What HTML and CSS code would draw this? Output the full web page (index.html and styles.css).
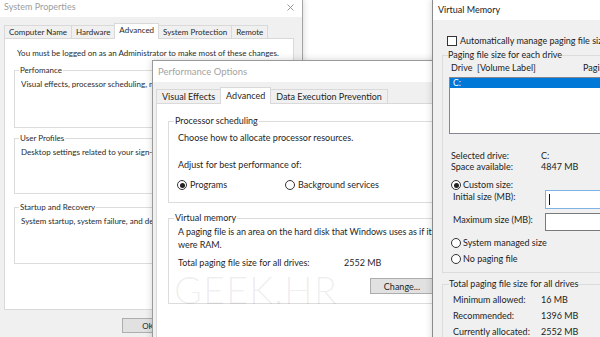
FILE: index.html
```html
<!DOCTYPE html>
<html lang="en">
<head>
<meta charset="utf-8">
<title>Virtual Memory</title>
<link rel="stylesheet" href="styles.css">
</head>
<body>
<div class="win sys">
  <div class="titlebar">
    <span class="title">System Properties</span>
    <svg class="close" width="7" height="7" viewBox="0 0 7 7"><path d="M0.5 0.5L6.5 6.5M6.5 0.5L0.5 6.5" stroke="#8c8c8c" stroke-width="0.9" fill="none"/></svg>
  </div>
  <div class="body">
    <div class="tabs">
      <div class="tab">Computer Name</div>
      <div class="tab">Hardware</div>
      <div class="tab sel">Advanced</div>
      <div class="tab">System Protection</div>
      <div class="tab">Remote</div>
    </div>
    <div class="panel">
      <p class="note">You must be logged on as an Administrator to make most of these changes.</p>
      <div class="group g1"><span class="legend">Perfomance</span><p class="txt">Visual effects, processor scheduling, memory usage, and virtual memory</p></div>
      <div class="group g2"><span class="legend">User Profiles</span><p class="txt">Desktop settings related to your sign-in</p></div>
      <div class="group g3"><span class="legend">Startup and Recovery</span><p class="txt">System startup, system failure, and debugging information</p></div>
    </div>
    <div class="btns"><button class="btn">OK</button><button class="btn">Cancel</button></div>
  </div>
</div>

<div class="win perf">
  <div class="titlebar"><span class="title">Performance Options</span></div>
  <div class="body">
    <div class="tabs">
      <div class="tab">Visual Effects</div>
      <div class="tab sel">Advanced</div>
      <div class="tab">Data Execution Prevention</div>
    </div>
    <div class="panel">
      <div class="group pg1">
        <span class="legend">Processor scheduling</span>
        <p class="line l1">Choose how to allocate processor resources.</p>
        <p class="line l2">Adjust for best performance of:</p>
        <div class="radios">
          <div class="ritem first"><span class="radio on"></span><span class="rlabel">Programs</span></div>
          <div class="ritem"><span class="radio"></span><span class="rlabel">Background services</span></div>
        </div>
      </div>
      <div class="group pg2">
        <span class="legend">Virtual memory</span>
        <p class="para">A paging file is an area on the hard disk that Windows uses as if it<br>were RAM.</p>
        <div class="total"><span class="tlabel">Total paging file size for all drives:</span><span>2552 MB</span></div>
        <button class="btn change">Change...</button>
      </div>
    </div>
  </div>
  <div class="watermark">GEEK.HR</div>
</div>

<div class="win vm">
  <div class="titlebar"><span class="title">Virtual Memory</span></div>
  <div class="body">
    <div class="check-row"><span class="checkbox"></span><span class="clabel">Automatically manage paging file size for all drives</span></div>
    <div class="group vg1">
      <span class="legend">Paging file size for each drive</span>
      <div class="hdr"><span class="hcol">Drive&nbsp; [Volume Label]</span><span>Paging File Size (MB)</span></div>
      <div class="listbox"><div class="item sel">C:</div></div>
      <div class="info first"><span class="ilabel">Selected drive:</span><span>C:</span></div>
      <div class="info"><span class="ilabel">Space available:</span><span>4847 MB</span></div>
      <div class="vradio custom"><span class="radio on"></span><span class="rlabel">Custom size:</span></div>
      <div class="field initial"><span class="flabel">Initial size (MB):</span><span class="input focus"><span class="caret"></span></span></div>
      <div class="field maximum"><span class="flabel">Maximum size (MB):</span><span class="input"></span></div>
      <div class="vradio sysm"><span class="radio"></span><span class="rlabel">System managed size</span></div>
      <div class="vradio nopf"><span class="radio"></span><span class="rlabel">No paging file</span></div>
    </div>
    <div class="group vg2">
      <span class="legend">Total paging file size for all drives</span>
      <div class="trow first"><span class="tl">Minimum allowed:</span><span>16 MB</span></div>
      <div class="trow"><span class="tl">Recommended:</span><span>1396 MB</span></div>
      <div class="trow"><span class="tl">Currently allocated:</span><span>2552 MB</span></div>
    </div>
  </div>
</div>
</body>
</html>
```
FILE: styles.css
```css
* { box-sizing: border-box; margin: 0; padding: 0; }
html, body { width: 600px; height: 337px; overflow: hidden; background: #fff; }
body { position: relative; font-family: Lato, "Liberation Sans", sans-serif; color: #1f1f1f; }

.win {
  position: absolute;
  display: flex;
  flex-direction: column;
  background: #f0f0f0;
  border: 1px solid #a3a3a3;
  box-shadow: 0 0 7px rgba(0, 0, 0, 0.18);
}
.titlebar {
  flex: none;
  display: flex;
  align-items: center;
  justify-content: space-between;
  background: #fff;
}
.title { white-space: nowrap; }
.body { flex: 1; display: flex; flex-direction: column; }
.tabs { display: flex; align-items: flex-end; flex: none; }
.tab {
  border: 1px solid #d9d9d9;
  border-bottom: none;
  background: #f0f0f0;
  margin-right: -1px;
  white-space: nowrap;
}
.tab.sel { background: #fff; position: relative; z-index: 1; margin-bottom: -1px; }
.panel { background: #fff; border: 1px solid #d9d9d9; flex: none; }
.group { border: 1px solid #dcdcdc; flex: none; }
.legend { display: block; width: fit-content; background: inherit; white-space: nowrap; }
.btn {
  display: block;
  font-family: inherit;
  color: #1f1f1f;
  background: #e1e1e1;
  border: 1px solid #adadad;
}
.radio {
  flex: none;
  width: 10px;
  height: 10px;
  border: 1px solid #333;
  border-radius: 50%;
  background: #fff;
  display: flex;
  align-items: center;
  justify-content: center;
}
.radio.on::after { content: ""; width: 5px; height: 5px; border-radius: 50%; background: #222; }

/* ---------- System Properties ---------- */
.sys { left: -1px; top: -1px; width: 304px; height: 350px; font-size: 8px; color: #2a2a2a; }
.sys .titlebar { height: 17px; padding: 0 8px 3px 4px; }
.sys .title { font-size: 9px; color: #9d9d9d; line-height: 12px; }
.sys .body { padding-left: 4px; }
.sys .tabs { margin-top: 6px; height: 15px; }
.sys .tab { height: 13px; line-height: 12px; padding: 0 4px; }
.sys .tab.sel { height: 16px; line-height: 13px; }
.sys .panel { width: 290px; height: 272px; }
.sys .note { margin: 9px 0 0 12px; line-height: 10px; white-space: nowrap; }
.sys .group { margin-left: 9px; width: 272px; background: #fff; }
.sys .g1 { margin-top: 12px; height: 58px; }
.sys .g2 { margin-top: 10px; height: 56px; }
.sys .g3 { margin-top: 13px; height: 57px; }
.sys .legend { margin: -6px 0 0 4px; padding: 0 1px; line-height: 10px; }
.sys .txt { margin: 4px 0 0 6px; width: 131px; overflow: hidden; line-height: 10px; white-space: nowrap; }
.sys .btns { display: flex; gap: 6px; margin: 8px 0 0 118px; }
.sys .btn { width: 52px; height: 15px; font-size: 8px; }

/* ---------- Performance Options ---------- */
.perf { left: 152px; top: 60px; width: 300px; height: 300px; font-size: 9px; border-color: #9a9a9a; }
.perf .titlebar { height: 21px; padding-left: 5px; }
.perf .title { font-size: 9.5px; color: #a3a3a3; line-height: 21px; }
.perf .body { padding-left: 3px; }
.perf .tabs { margin-top: 5px; height: 16px; }
.perf .tab { height: 14px; line-height: 13px; padding: 0 5px; }
.perf .tab.sel { height: 17px; line-height: 15px; }
.perf .panel { width: 300px; height: 260px; }
.perf .group { margin-left: 11px; width: 275px; padding-left: 9px; background: #fff; }
.perf .legend { margin: -7px 0 0 -4px; padding: 0 1px; line-height: 12px; }
.perf .line { line-height: 12px; white-space: nowrap; }
.perf .pg1 { margin-top: 17px; height: 82px; }
.perf .l1 { margin-top: 5px; }
.perf .l2 { margin-top: 15px; }
.perf .radios { display: flex; margin: 8px 0 0 -1px; height: 12px; align-items: center; }
.perf .ritem { display: flex; align-items: center; white-space: nowrap; }
.perf .ritem.first { width: 108px; }
.perf .rlabel { margin-left: 3px; line-height: 12px; }
.perf .pg2 { margin-top: 15px; height: 86px; }
.perf .para { margin-top: 1px; line-height: 13px; white-space: nowrap; letter-spacing: -0.05px; }
.perf .total { display: flex; margin-top: 6px; line-height: 12px; white-space: nowrap; }
.perf .tlabel { width: 166px; flex: none; }
.perf .change { margin: 9px 0 0 192px; width: 64px; height: 16px; font-size: 9px; }
.watermark {
  position: absolute;
  left: 21px;
  top: 214px;
  font-size: 38px;
  line-height: 28px;
  font-weight: 300;
  letter-spacing: 1px;
  color: rgba(0, 0, 0, 0.075);
  pointer-events: none;
  white-space: nowrap;
}

/* ---------- Virtual Memory ---------- */
.vm { left: 432px; top: -1px; width: 180px; height: 350px; font-size: 9px; border-color: #8a8a8a; color: #1c1c1c; }
.vm .titlebar { height: 20px; padding-left: 5px; }
.vm .title { font-size: 9px; line-height: 18px; color: #1c1c1c; }
.vm .check-row { display: flex; align-items: center; margin: 16px 0 0 14px; height: 10px; }
.vm .checkbox { flex: none; width: 10px; height: 10px; border: 1px solid #333; background: #fff; }
.vm .clabel { margin-left: 3px; line-height: 10px; white-space: nowrap; }
.vm .group { margin-left: 9px; width: 200px; padding-left: 8px; }
.vm .legend { margin-top: -7px; line-height: 12px; background: #f0f0f0; }
.vm .vg1 { margin-top: 9px; height: 218px; }
.vm .vg1 .legend { margin-left: -3px; }
.vm .hdr { display: flex; margin-top: 1px; line-height: 12px; white-space: nowrap; }
.vm .hcol { width: 132px; flex: none; }
.vm .listbox { margin: 3px 0 0 -2px; width: 200px; height: 57px; background: #fff; border: 1px solid #828790; }
.vm .item { height: 10px; line-height: 10px; padding-left: 3px; font-size: 8.5px; }
.vm .item.sel { background: #0078d7; color: #fff; }
.vm .info { display: flex; line-height: 11px; white-space: nowrap; }
.vm .info.first { margin-top: 16px; }
.vm .ilabel { width: 90px; flex: none; }
.vm .vradio { display: flex; align-items: center; height: 12px; white-space: nowrap; }
.vm .rlabel { margin-left: 2px; line-height: 12px; }
.vm .custom { margin-top: 7px; }
.vm .field { display: flex; white-space: nowrap; }
.vm .flabel { width: 94px; flex: none; padding-left: 2px; line-height: 14px; }
.vm .input { display: flex; align-items: center; width: 80px; background: #fff; border: 1px solid #7a7a7a; }
.vm .initial { margin-top: -1px; height: 19px; }
.vm .initial .input { height: 19px; border-color: #7fb2e5; }
.vm .caret { width: 1px; height: 11px; margin-left: 3px; background: #111; }
.vm .maximum { margin-top: 4px; height: 18px; }
.vm .maximum .input { height: 18px; }
.vm .sysm { margin-top: 6px; }
.vm .nopf { margin-top: 4px; }
.vm .vg2 { margin-top: 11px; height: 80px; }
.vm .vg2 .legend { margin-left: -2px; }
.vm .trow { display: flex; line-height: 16px; padding-left: 2px; white-space: nowrap; }
.vm .trow.first { margin-top: 2px; }
.vm .tl { width: 88px; flex: none; }
```
